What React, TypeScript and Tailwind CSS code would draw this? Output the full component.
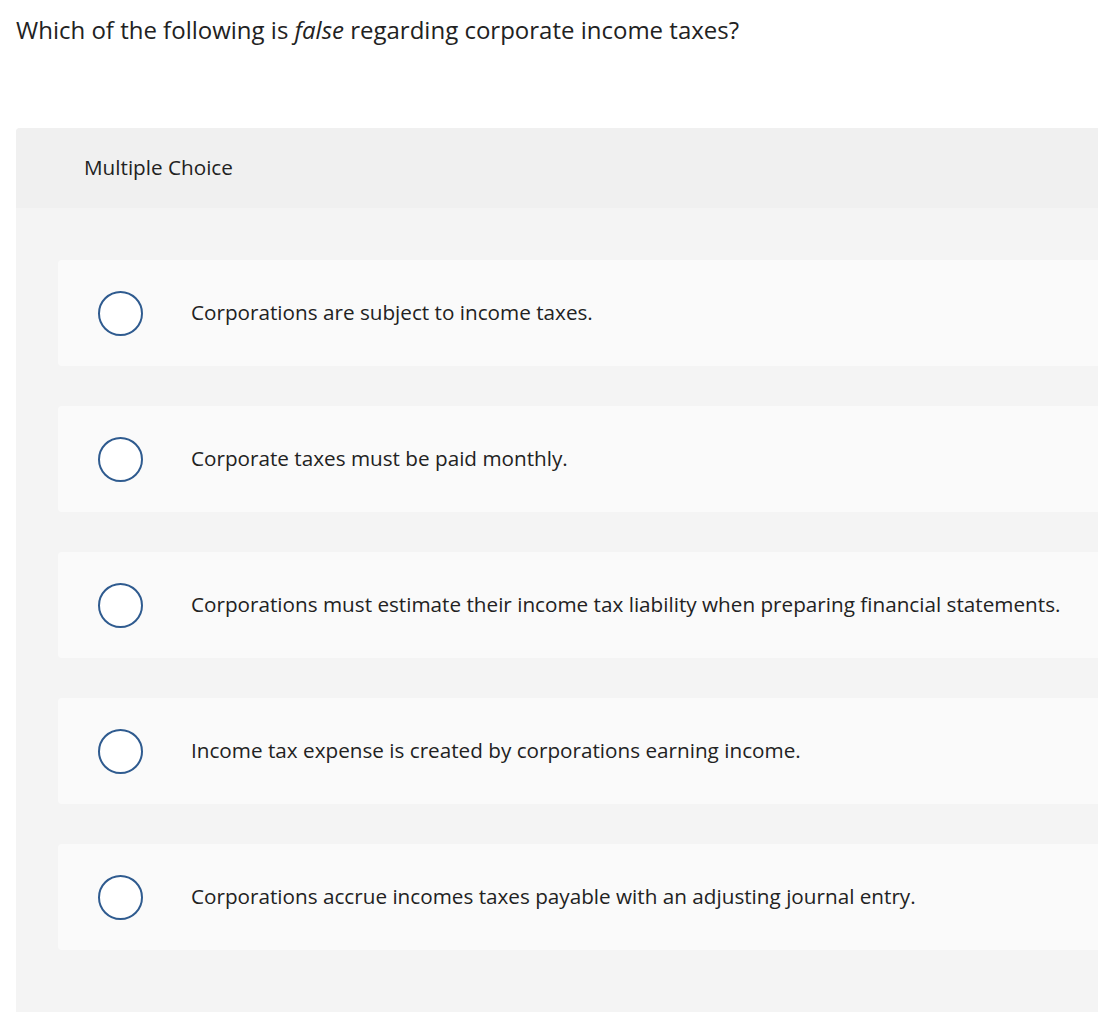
const options = [
  "Corporations are subject to income taxes.",
  "Corporate taxes must be paid monthly.",
  "Corporations must estimate their income tax liability when preparing financial statements.",
  "Income tax expense is created by corporations earning income.",
  "Corporations accrue incomes taxes payable with an adjusting journal entry.",
];

const App = () => {
  return (
    <div
      className="w-[1098px] h-[1014px] overflow-hidden bg-white text-[#222]"
      style={{ fontFamily: "'Open Sans', Lato, sans-serif" }}
    >
      <p className="pl-4 pt-[15px] text-[24px] leading-[30px]">
        Which of the following is <em>false</em> regarding corporate income taxes?
      </p>

      <div className="ml-4 mt-[83px] w-[1110px] rounded-tl-[4px] bg-[#f4f4f4]">
        <div className="h-20 flex items-center pl-[68px] bg-[#f0f0f0] rounded-tl-[4px] text-[20.7px]">
          Multiple Choice
        </div>
        <div className="pl-[42px] pt-[52px] pb-[62px] flex flex-col gap-10">
          {options.map((opt, i) => (
            <div
              key={i}
              className="h-[106px] flex items-center bg-[#fafafa] rounded-l-[4px] pl-10"
            >
              <span className="w-[45px] h-[45px] rounded-full border-2 border-[#2f5b8f] bg-white shrink-0" />
              <span className="ml-12 text-[20.7px]">{opt}</span>
            </div>
          ))}
        </div>
      </div>
    </div>
  );
};

export default App;
